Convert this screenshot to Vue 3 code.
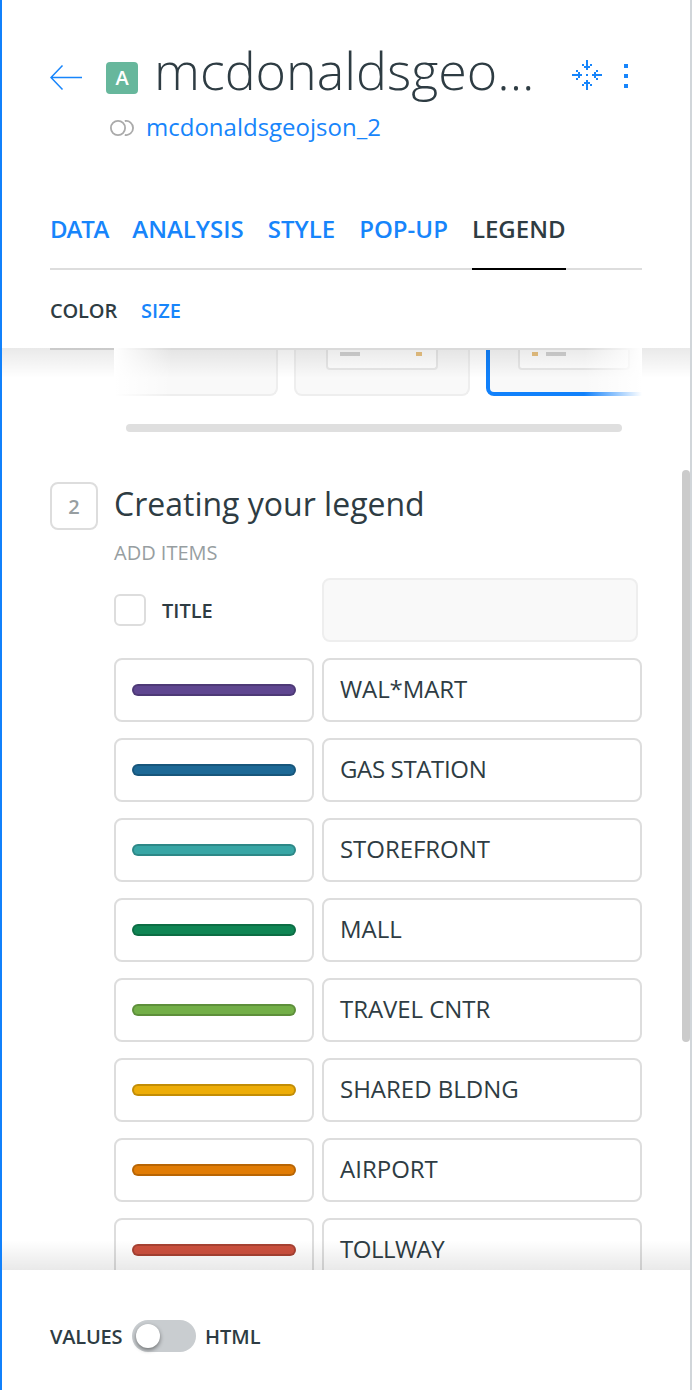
<script setup>
const tabs = [
  { label: 'DATA', spacing: -1.15 },
  { label: 'ANALYSIS', spacing: 0 },
  { label: 'STYLE', spacing: 0 },
  { label: 'POP-UP', spacing: 0 },
  { label: 'LEGEND', spacing: 0, active: true },
]
const items = [
  { name: 'WAL*MART', color: '#5F4690', spacing: -0.1 },
  { name: 'GAS STATION', color: '#1D6996', spacing: -0.35 },
  { name: 'STOREFRONT', color: '#38A6A5', spacing: -0.05 },
  { name: 'MALL', color: '#0F8554', spacing: 0 },
  { name: 'TRAVEL CNTR', color: '#73AF48', spacing: -0.05 },
  { name: 'SHARED BLDNG', color: '#EDAD08', spacing: 0 },
  { name: 'AIRPORT', color: '#E17C05', spacing: 0 },
  { name: 'TOLLWAY', color: '#CC503E', spacing: -0.5 },
]
</script>

<template>
  <div class="panel">
    <header class="head">
      <div class="title-row">
        <svg class="back" width="32" height="26" viewBox="0 0 32 26" fill="none" stroke="#1785fb" stroke-width="1.5">
          <path d="M12.5 .5 L1 12.5 L12.5 24.5 M1 12.5 H32" />
        </svg>
        <span class="letter">A</span>
        <h1>mcdonaldsgeo...</h1>
        <svg class="collapse" width="30" height="30" viewBox="0 0 15 15" fill="#1785fb">
          <g v-for="a in [0, 90, 180, 270]" :key="a" :transform="`rotate(${a} 7.5 7.5)`">
            <path d="M7 0H8V3H9V4H8V5H7V4H6V3H7ZM5 2H6V3H5ZM9 2H10V3H9Z" />
          </g>
          <path d="M7 7H8V8H7Z" />
        </svg>
        <div class="dots"><i></i><i></i><i></i></div>
      </div>
      <div class="source">
        <svg width="24" height="16" viewBox="0 0 24 16" fill="none" stroke="#aaaaaa" stroke-width="1.8">
          <circle cx="8" cy="8" r="7.1" />
          <path d="M14.8 1A7.1 7.1 0 1 1 14.8 15" />
        </svg>
        <a>mcdonaldsgeojson_2</a>
      </div>
      <nav class="tabs">
        <span v-for="t in tabs" :key="t.label" :class="{ active: t.active }" :style="{ letterSpacing: t.spacing + 'px' }">{{ t.label }}</span>
      </nav>
      <nav class="subtabs"><span class="active">COLOR</span><span>SIZE</span></nav>
    </header>

    <main class="body">
      <div class="edge"></div>
      <div class="carousel">
        <div class="card"></div>
        <div class="card"><div class="mini spread"><b></b><em></em></div></div>
        <div class="card selected"><div class="mini"><em></em><b></b></div></div>
        <div class="shade"></div>
        <div class="rule"></div>
        <div class="fade left"></div>
        <div class="fade right"></div>
      </div>
      <div class="track"></div>

      <section class="step">
        <span class="num">2</span>
        <div class="content">
          <h2>Creating your legend</h2>
          <p>ADD ITEMS</p>
          <div class="row title-field">
            <label><span class="check"></span>TITLE</label>
            <div class="field disabled"></div>
          </div>
          <div v-for="i in items" :key="i.name" class="row">
            <div class="swatch"><span :style="{ backgroundColor: i.color }"></span></div>
            <div class="field" :style="{ letterSpacing: i.spacing + 'px' }">{{ i.name }}</div>
          </div>
        </div>
      </section>
      <div class="shadow top"></div>
      <div class="shadow bottom"></div>
      <div class="scrollbar"></div>
    </main>

    <footer class="foot">
      <span class="values">VALUES</span>
      <div class="toggle"><i></i></div>
      <span>HTML</span>
    </footer>
  </div>
</template>

<style>
body { margin: 0; background: #fff; }
</style>

<style scoped>
* { box-sizing: border-box; }
h1, h2, p { margin: 0; font-weight: 400; }
.panel {
  width: 692px; height: 1390px; overflow: hidden;
  display: flex; flex-direction: column;
  border-left: 2px solid #1181fb; border-right: 2px solid #d1d6da;
  font-family: "Open Sans", "Noto Sans", sans-serif; color: #2e3c43; background: #fff;
}
.head { height: 348px; padding: 40px 48px 0; flex: none; display: flex; flex-direction: column; }
.title-row { display: flex; align-items: center; height: 72px; flex: none; }
.back { margin-right: 24px; margin-top: 4px; }
.letter {
  width: 32px; height: 32px; border-radius: 4px; background: #67b79c; color: #fff;
  font-size: 20px; font-weight: 600; line-height: 31px; text-align: center; margin-top: 4px;
}
h1 { font-size: 52px; font-weight: 300; line-height: 64px; margin: -13px 0 0 16px; width: 418px; white-space: nowrap; }
.collapse { margin-top: -2px; }
.dots { display: flex; flex-direction: column; gap: 6px; margin-left: 22px; }
.dots i { width: 4px; height: 4px; background: #1785fb; }
.source { display: flex; align-items: center; height: 32px; margin-left: 60px; flex: none; color: #1785fb; font-size: 24px; }
.source svg { margin-right: 12px; }
.source a { margin-top: -4px; }
.tabs {
  margin-top: 46px; height: 80px; flex: none; display: flex; gap: 24px; line-height: 78px;
  font-size: 24px; font-weight: 600; color: #1785fb; box-shadow: inset 0 -2px #ddd;
}
.tabs .active { color: #2e3c43; box-shadow: inset 0 -2px #000; }
.subtabs { display: flex; gap: 24px; font-size: 20px; font-weight: 600; line-height: 82px; color: #1785fb; }
.subtabs .active { color: #2e3c43; letter-spacing: -.15px; }

.body { height: 922px; flex: none; position: relative; overflow: hidden; }
.edge { position: absolute; left: 48px; top: 0; width: 64px; height: 2px; background: #ddd; }
.carousel { margin-left: 112px; width: 528px; height: 48px; display: flex; gap: 16px; overflow: hidden; position: relative; z-index: 2; background: #fff; }
.card { width: 176px; flex: none; height: 48px; background: #f9f9f9; border: 2px solid #eee; border-top: 0; border-radius: 0 0 8px 8px; padding-left: 30px; }
.card:first-child { margin-left: -12px; }
.card.selected { border: 4px solid #1181fb; border-top: 0; padding-left: 28px; }
.mini { width: 112px; height: 22px; border: 2px solid #e8e8e8; border-top: 0; border-radius: 0 0 4px 4px; background: #fff; display: flex; gap: 8px; padding: 4px 12px 0; }
.spread { justify-content: space-between; padding-right: 14px; }
.mini b { width: 20px; height: 4px; background: #d3d3d3; }
.mini em { width: 6px; height: 4px; background: #eac382; }
.shade, .shadow { position: absolute; left: 0; right: 0; top: 0; height: 30px; background: linear-gradient(rgba(0,0,0,.085), transparent); }
.rule { position: absolute; left: 0; right: 0; top: 0; height: 2px; background: #dadada; }
.fade { position: absolute; top: 0; width: 58px; height: 48px; }
.fade.left { left: 0; background: linear-gradient(90deg, #fff, rgba(255,255,255,0)); }
.fade.right { right: 0; background: linear-gradient(270deg, #fff, rgba(255,255,255,0)); }
.track { margin: 28px 0 0 124px; width: 496px; height: 8px; border-radius: 4px; background: #dfdfdf; }

.step { display: flex; gap: 16px; padding: 50px 48px 0; }
.num { width: 48px; height: 48px; flex: none; border: 2px solid #ddd; border-radius: 8px; color: #979ea1; font-size: 20px; font-weight: 600; line-height: 46px; text-align: center; }
.content { width: 528px; flex: none; }
h2 { font-size: 32px; line-height: 44px; }
p { font-size: 20px; line-height: 28px; margin-top: 13px; color: #979ea1; }
.row { display: flex; gap: 8px; margin-bottom: 16px; }
.title-field { margin-top: 11px; }
label { width: 200px; display: flex; align-items: center; gap: 16px; font-size: 20px; font-weight: 600; }
.check { width: 32px; height: 32px; border: 2px solid #ddd; border-radius: 6px; }
.swatch { width: 200px; height: 64px; border: 2px solid #ddd; border-radius: 8px; padding: 24px 16px; }
.swatch span { display: block; height: 12px; border-radius: 6px; border: 2px solid rgba(0,0,0,.18); }
.field { width: 320px; height: 64px; border: 2px solid #ddd; border-radius: 8px; padding-left: 16px; font-size: 24px; line-height: 58px; }
.field.disabled { width: 316px; background: #f9f9f9; border-color: #eee; }
.shadow.bottom { top: auto; bottom: 0; right: -2px; transform: scaleY(-1); }
.scrollbar { position: absolute; right: 0; top: 122px; width: 8px; height: 572px; border-radius: 4px; background: #cbcbcb; }

.foot { height: 120px; flex: none; display: flex; align-items: center; padding: 12px 48px 0; font-size: 20px; font-weight: 600; }
.values { width: 73px; letter-spacing: -.2px; }
.toggle { width: 64px; height: 32px; border-radius: 16px; background: #c9cdd0; margin: 0 9px; padding: 4px; }
.toggle i { display: block; width: 24px; height: 24px; border-radius: 50%; background: #fff; box-shadow: 0 2px 4px rgba(0,0,0,.45); }
</style>
